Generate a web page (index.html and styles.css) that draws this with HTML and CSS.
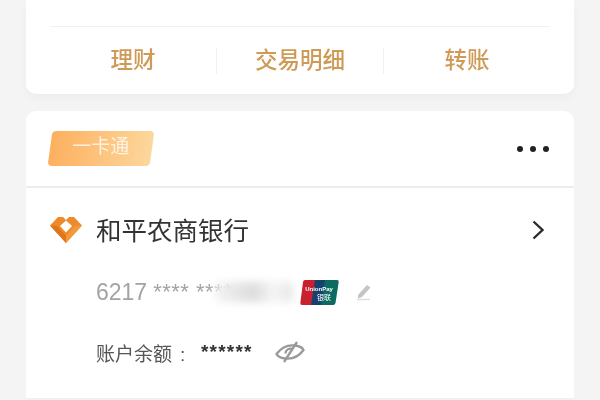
FILE: index.html
```html
<!DOCTYPE html>
<html lang="zh-CN">
<head>
  <meta charset="UTF-8" />
  <meta name="viewport" content="width=device-width, initial-scale=1" />
  <title>一卡通</title>
  <link rel="stylesheet" href="styles.css">
</head>
<body>
  <section class="card actions">
    <div class="tabs">
      <a class="tab">理财</a>
      <a class="tab">交易明细</a>
      <a class="tab">转账</a>
    </div>
  </section>

  <section class="card account">
    <header class="account-head">
      <span class="tag"><span class="tag-text">一卡通</span></span>
      <span class="more"><i></i><i></i><i></i></span>
    </header>
    <div class="account-body">
      <div class="bank">
        <svg class="bank-logo" viewBox="0 0 32 26" aria-hidden="true">
          <path d="M8 0h5l3 3 3-3h5l8 8.500L16 26 0 8.500z" fill="#ee8a2a"/>
          <path d="M0 8.500L16 26v-7L7 9z" fill="#e0761c"/>
          <path d="M32 8.500L16 26v-7l9-10z" fill="#f29a3a"/>
          <path d="M16 3.500l6 5.500-6 6.500-6-6.500z" fill="#fff"/>
        </svg>
        <span class="bank-name">和平农商银行</span>
        <svg class="chevron" viewBox="0 0 14 22" aria-hidden="true">
          <path d="M2.500 2.500L11.500 11l-9 8.500" fill="none" stroke="#2b2b2b" stroke-width="2.400"/>
        </svg>
      </div>
      <div class="number">
        <span class="number-start">6217</span>
        <span class="number-mask">**** ****</span>
        <span class="smudge"></span>
        <svg class="unionpay" viewBox="0 0 39 25" aria-hidden="true">
          <path d="M5 0h13l-4 25H2q-2 0-1.600-2.500L3 2q.4-2 2-2z" fill="#c8202c"/>
          <path d="M15 0h12l-4 25H11z" fill="#17406f"/>
          <path d="M25 0h12q2 0 1.700 2l-3.200 21q-.4 2-2.500 2H21z" fill="#0c6a60"/>
          <text x="19" y="11" class="up-latin">UnionPay</text>
          <text x="24" y="20" class="up-cjk">银联</text>
        </svg>
        <svg class="pen" viewBox="0 0 18 18" aria-hidden="true">
          <path d="M3 12L12 2l3.500 2.500L7 14l-4 1.500z" fill="#c4c4c4"/>
          <path d="M2 16.500h13" stroke="#dcdcdc" stroke-width="1.400"/>
        </svg>
      </div>
      <div class="balance">
        <span class="balance-label">账户余额<span class="colon">:</span></span>
        <span class="balance-mask">******</span>
        <svg class="eye" viewBox="0 0 30 22" aria-hidden="true">
          <path d="M1.500 13Q9 3 20 4.500 27 5.500 28.500 9 21 19 10 17.500 3 16.500 1.500 13z" fill="none" stroke="#999" stroke-width="2.300"/>
          <path d="M10.500 12.500a5 5 0 0 1 7-4.500" fill="none" stroke="#999" stroke-width="2.300"/>
          <path d="M9 21L22 1" stroke="#999" stroke-width="2.300"/>
        </svg>
      </div>
    </div>
    <div class="account-foot"></div>
  </section>
</body>
</html>
```

FILE: styles.css
```css
html, body {
  height: 100%;
}
body {
  margin: 0;
  padding: 0 26px;
  box-sizing: border-box;
  overflow: hidden;
  background: #f4f4f4;
  font-family: "Liberation Sans", "Noto Sans CJK SC", sans-serif;
  color: #333;
}
.card {
  background: #fff;
  filter: blur(0.4px);
}
.actions {
  height: 94px;
  padding: 26px 24px 0;
  box-sizing: border-box;
  border-radius: 0 0 10px 10px;
  box-shadow: 0 4px 10px rgba(0,0,0,0.03);
}
.tabs {
  display: flex;
  align-items: center;
  height: 67px;
  border-top: 1px solid #f0f0f0;
}
.tab {
  flex: 1;
  text-align: center;
  font-size: 22.500px;
  font-weight: 500;
  line-height: 26px;
  color: #cf9a55;
  border-left: 1px solid #f1f1f1;
  margin-top: 1px;
}
.tab:first-child {
  border-left: none;
}
.account {
  margin-top: 17px;
  border-radius: 10px 10px 0 0;
}
.account-head {
  display: flex;
  align-items: center;
  justify-content: space-between;
  height: 75px;
  padding: 0 25px 0 22px;
  border-bottom: 2px solid #ededed;
}
.tag {
  display: block;
  width: 102px;
  height: 35px;
  margin: -1px 0 0 2px;
  border-radius: 4px;
  background: linear-gradient(90deg, #fdb05f, #fcd79c);
  transform: skewX(-8deg);
  text-align: center;
}
.tag-text {
  display: block;
  transform: skewX(8deg);
  margin-left: -1px;
  font-size: 19px;
  line-height: 32px;
  color: rgba(255,255,255,0.75);
}
.more {
  display: flex;
  gap: 7px;
}
.more i {
  width: 6px;
  height: 6px;
  border-radius: 50%;
  background: #222;
}
.account-body {
  padding: 0 29px 0 24px;
}
.bank {
  display: flex;
  align-items: center;
  height: 84px;
}
.bank-logo {
  width: 32px;
  height: 26px;
  margin-right: 14px;
}
.bank-name {
  flex: 1;
  margin-bottom: 4px;
  font-size: 25.500px;
  color: #333;
}
.chevron {
  width: 14px;
  height: 22px;
}
.number {
  display: flex;
  align-items: center;
  height: 40px;
  margin-left: 46px;
  color: #a3a3a3;
}
.number-start {
  font-size: 23px;
  margin-right: 6px;
}
.number-mask {
  font-size: 22px;
  letter-spacing: 0.500px;
  white-space: pre;
  width: 84px;
  overflow: hidden;
}
.smudge {
  width: 78px;
  height: 20px;
  margin-left: -22px;
  background: linear-gradient(90deg, #f4f4f4, #dcdcdc 50%, #f6f6f6 75%, #e6e6e6);
  filter: blur(4px);
}
.unionpay {
  width: 39px;
  height: 25px;
  margin-left: 7px;
}
.up-latin {
  font-size: 6px;
  font-weight: bold;
  fill: #fff;
  text-anchor: middle;
}
.up-cjk {
  font-size: 7px;
  fill: #fff;
  text-anchor: middle;
}
.pen {
  width: 18px;
  height: 18px;
  margin-left: 16px;
}
.balance {
  display: flex;
  align-items: center;
  height: 40px;
  margin: 20px 0 0 46px;
}
.balance-label {
  width: 105px;
  font-size: 19px;
  color: #555;
}
.colon {
  margin-left: 8px;
}
.balance-mask {
  width: 74px;
  font-size: 19px;
  font-weight: bold;
  letter-spacing: 1.200px;
  color: #333;
}
.eye {
  width: 30px;
  height: 22px;
}
.account-foot {
  margin-top: 26px;
  border-top: 2px solid #f0f0f0;
}
```
